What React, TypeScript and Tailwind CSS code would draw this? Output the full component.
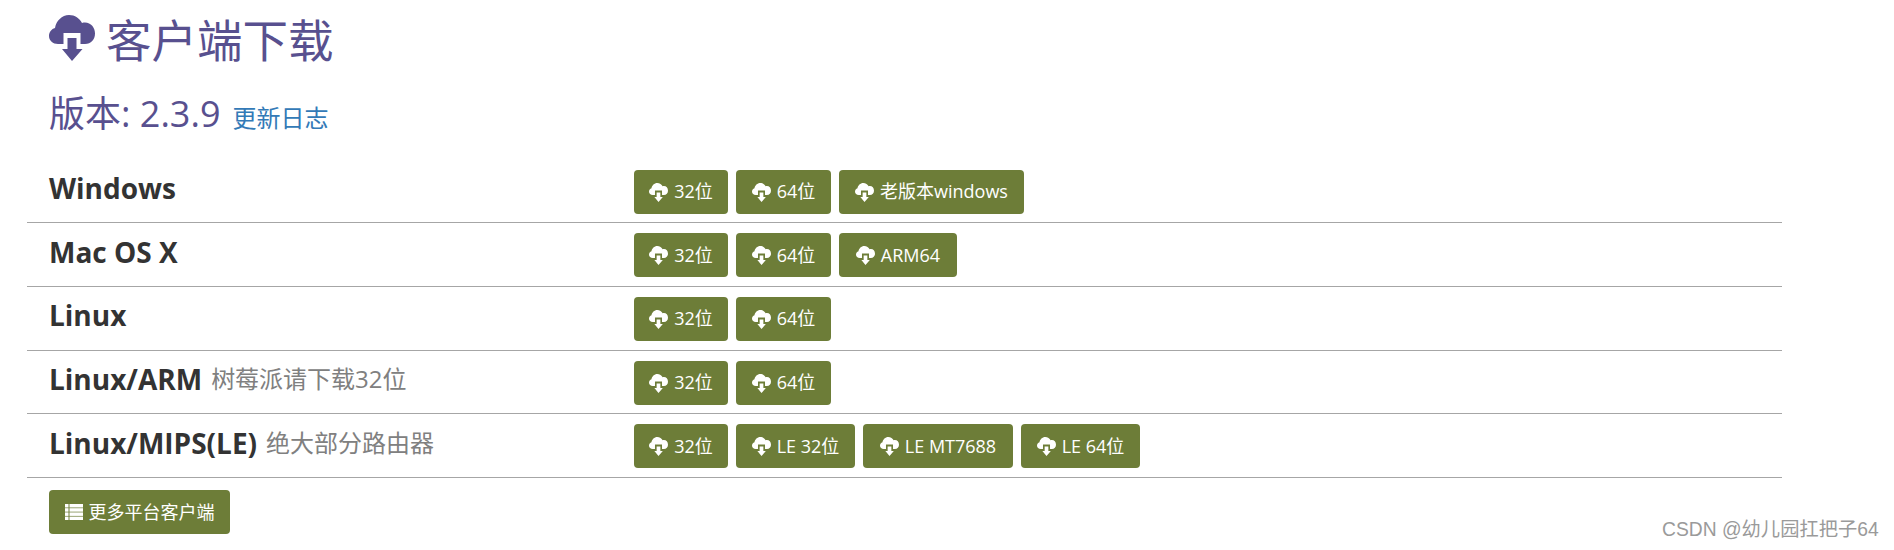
const F = "[font-family:'Open_Sans','Noto_Sans_CJK_SC',sans-serif]";

function CloudDown({ className }: { className: string }) {
  return (
    <svg viewBox="0 0 46 46" className={className} fill="currentColor">
      <path d="M9 29C4 29 0 25.500 0 21C0 17 2.500 14 6 13C7 6 13 0 20 0C26 0 30.500 3.500 33 8C34 7.500 35 7.500 36 7.500C42 7.500 46 12.500 46 18.500C46 24.500 42 29 36 29H31.500V18H14.500V29Z" />
      <path d="M18.500 23H27.500V34H33.500L23 46L13 34H18.500Z" />
    </svg>
  );
}

function ListIcon({ className }: { className: string }) {
  return (
    <svg viewBox="0 0 18 16" className={className} fill="currentColor">
      <rect x="0" y="0" width="3.500" height="3.500" />
      <rect x="0" y="4.200" width="3.500" height="3.500" />
      <rect x="0" y="8.400" width="3.500" height="3.500" />
      <rect x="0" y="12.600" width="3.500" height="3.500" />
      <rect x="4.500" y="0" width="13.500" height="3.500" />
      <rect x="4.500" y="4.200" width="13.500" height="3.500" />
      <rect x="4.500" y="8.400" width="13.500" height="3.500" />
      <rect x="4.500" y="12.600" width="13.500" height="3.500" />
    </svg>
  );
}

function Btn({ label, w }: { label: string; w: string }) {
  return (
    <a className={`flex h-[44px] items-center justify-center gap-[6px] rounded-[4px] bg-[#6d7d38] text-[18px] text-white ${w}`}>
      <CloudDown className="h-[19px] w-[19px] mt-[1px]" />
      <span>{label}</span>
    </a>
  );
}

const rows = [
  { name: "Windows", note: "", btns: [["32位", "w-[94px]"], ["64位", "w-[95px]"], ["老版本windows", "w-[185px]"]] },
  { name: "Mac OS X", note: "", btns: [["32位", "w-[94px]"], ["64位", "w-[95px]"], ["ARM64", "w-[118px]"]] },
  { name: "Linux", note: "", btns: [["32位", "w-[94px]"], ["64位", "w-[95px]"]] },
  { name: "Linux/ARM", note: "树莓派请下载32位", btns: [["32位", "w-[94px]"], ["64位", "w-[95px]"]] },
  { name: "Linux/MIPS(LE)", note: "绝大部分路由器", btns: [["32位", "w-[94px]"], ["LE 32位", "w-[119px]"], ["LE MT7688", "w-[150px]"], ["LE 64位", "w-[119px]"]] },
];

export default function App() {
  return (
    <div className={`relative h-[550px] w-[1894px] overflow-hidden bg-white ${F}`}>
      <div className="w-[1782px] pl-[27px]">
        <div className="flex h-[76px] items-start pl-[22px] pt-[15px] text-[#58508f]">
          <CloudDown className="h-[46px] w-[46px]" />
          <h1 className="ml-[11px] text-[45.500px] leading-[46px] mt-[2px]">客户端下载</h1>
        </div>
        <div className="flex h-[70px] items-baseline pl-[22px] pt-[16px] text-[#58508f]">
          <span className="text-[36px] leading-[44px]">版本: 2.3.9</span>
          <a className="ml-[12px] text-[24px] text-[#337ab7]">更新日志</a>
        </div>
        <div className="pt-[13.600px]">
          {rows.map((r) => (
            <div key={r.name} className="flex h-[63.700px] items-start border-b border-[#a6a6a6] pl-[22px]">
              <div className="flex h-[57px] w-[585px] items-center">
                <span className="text-[28px] font-bold text-[#333333] leading-none">{r.name}</span>
                {r.note && <span className="ml-[9px] text-[24px] text-[#808080] leading-none">{r.note}</span>}
              </div>
              <div className="flex gap-[8px] pt-[10px]">
                {r.btns.map((b, j) => (
                  <Btn key={j} label={b[0]} w={b[1]} />
                ))}
              </div>
            </div>
          ))}
        </div>
        <div className="pl-[22px] pt-[12px]">
          <a className="flex h-[44px] w-[181px] items-center justify-center gap-[6px] rounded-[4px] bg-[#6d7d38] text-[18px] text-white">
            <ListIcon className="h-[16px] w-[18px]" />
            <span>更多平台客户端</span>
          </a>
        </div>
      </div>
      <div className="absolute left-[1662px] top-[518px] text-[19.300px] leading-[24px] text-[#9a9a9a] [font-family:'Liberation_Sans','Noto_Sans_CJK_SC',sans-serif]">
        CSDN @幼儿园扛把子64
      </div>
    </div>
  );
}
